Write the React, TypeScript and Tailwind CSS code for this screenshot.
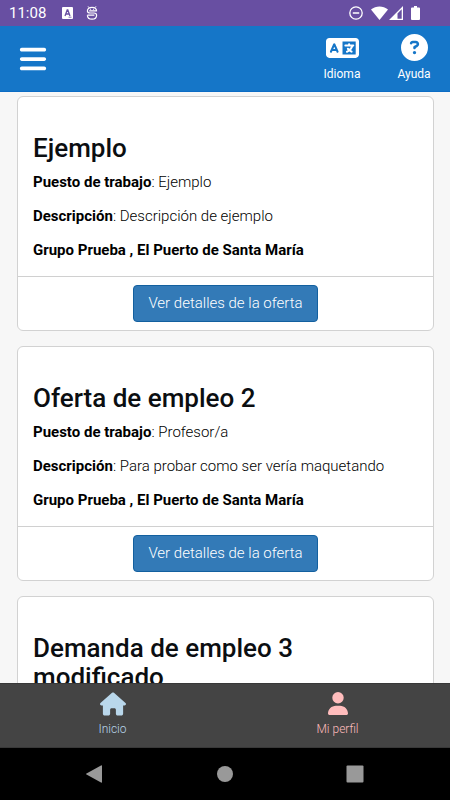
import React from "react";
import { FaBars, FaCircleQuestion, FaHouse, FaLanguage, FaUser } from "react-icons/fa6";

type Details = { job: string; description: string; place: string };
type Offer = { title: string; details?: Details };

const offers: Offer[] = [
  {
    title: "Ejemplo",
    details: {
      job: "Ejemplo",
      description: "Descripción de ejemplo",
      place: "Grupo Prueba , El Puerto de Santa María",
    },
  },
  {
    title: "Oferta de empleo 2",
    details: {
      job: "Profesor/a",
      description: "Para probar como ser vería maquetando",
      place: "Grupo Prueba , El Puerto de Santa María",
    },
  },
  { title: "Demanda de empleo 3 modificado" },
];

function StatusBar() {
  return (
    <div className="flex h-[26px] shrink-0 items-center bg-[#684fa2] pr-[30px] pl-[9px] text-white">
      <span className="w-[53px] text-[15px] leading-[26px]">11:08</span>
      <svg className="mr-[13px] h-3 w-[11px]" viewBox="0 0 11 12" aria-hidden="true">
        <rect width="11" height="12" rx="1" fill="#fff" />
        <path d="M3 9 5.2 3h.6L8 9M3.8 7h3.4" fill="none" stroke="#684fa2" strokeWidth="1.3" />
        <path d="M6.5 10.2h3" stroke="#684fa2" strokeWidth=".8" />
      </svg>
      <svg className="h-[14px] w-3" viewBox="0 0 12 14" fill="none" stroke="#fff" aria-hidden="true">
        <path
          d="M10.600 5.300C10.600 2.800 8.700 1.300 6 1.300S1.400 2.800 1.400 5c0 1.500 1 2 2.600 2h4c1.700 0 2.600.700 2.600 2.200 0 2.500-1.900 4-4.600 4s-4.600-1.500-4.600-4"
          strokeWidth="1.200"
        />
        <path d="M3.200 4.900h7.400M1.400 9.100h7" strokeWidth="1.100" />
        <path d="m2 .3 1.200 1.500M10 .3 8.800 1.800M4 3.300h1M7 3.300h1" strokeWidth=".9" />
      </svg>
      <div className="ml-auto flex items-center">
        <svg className="mr-2 h-3.5 w-3.5" viewBox="0 0 14 14" fill="none" stroke="#fff" aria-hidden="true">
          <circle cx="7" cy="7" r="6.2" strokeWidth="1.3" />
          <path d="M3.800 7h6.400" strokeWidth="1.5" />
        </svg>
        <svg className="mr-px h-[14px] w-[17px]" viewBox="0 0 17 14" aria-hidden="true">
          <path d="M0 3.500C5-.5 12-.5 17 3.500L8.500 14z" fill="#fff" />
        </svg>
        <svg className="mr-2 h-[14px] w-[14px]" viewBox="0 0 14 14" aria-hidden="true">
          <path
            fillRule="evenodd"
            d="M14 0v14H0zM12.700 3.200 8.500 7.400v5.300h4.200z"
            fill="#fff"
          />
        </svg>
        <svg className="h-[14px] w-[9px]" viewBox="0 0 9 14" aria-hidden="true">
          <path d="M3 0h3v1.500h2q1 0 1 1V13q0 1-1 1H1q-1 0-1-1V2.500q0-1 1-1h2z" fill="#fff" />
        </svg>
      </div>
    </div>
  );
}

function Header() {
  return (
    <header className="flex h-[66px] shrink-0 items-center border-b border-[#0c6cc4] bg-[#1576c8] pl-[18px] text-white">
      <button type="button" aria-label="Menú">
        <FaBars className="h-[30px] w-[30px]" />
      </button>
      <div className="ml-auto flex pb-[3px]">
        <button type="button" className="flex w-[72px] flex-col items-center">
          <FaLanguage className="h-[30px] w-[33px]" />
          <span className="mt-[3px] text-[12px] leading-4">Idioma</span>
        </button>
        <button type="button" className="flex w-[72px] flex-col items-center">
          <span className="flex h-[30px] items-center">
            <FaCircleQuestion className="h-[27px] w-[27px]" />
          </span>
          <span className="mt-[3px] text-[12px] leading-4">Ayuda</span>
        </button>
      </div>
    </header>
  );
}

function OfferCard({ title, details }: Offer) {
  return (
    <article className="shrink-0 rounded-md border border-[#d2d2d2] bg-white">
      <div className="px-[15px] pt-[37px] pb-3.5 text-[15px] leading-6 font-light text-black">
        <h2 className="mb-[7px] text-[26px] leading-[29px] font-medium text-[#0b0e11]">{title}</h2>
        {details && (
          <>
            <p className="mb-2.5">
              <strong className="font-bold">Puesto de trabajo</strong>: {details.job}
            </p>
            <p className="mb-2.5">
              <strong className="font-bold">Descripción</strong>: {details.description}
            </p>
            <p className="font-bold">{details.place}</p>
          </>
        )}
      </div>
      {details && (
        <div className="flex justify-center border-t border-[#d0d0d0] py-2">
          <button
            type="button"
            className="h-[37px] rounded border border-[#13609f] bg-[#337ab7] px-3.5 text-[15px] font-light text-white"
          >
            Ver detalles de la oferta
          </button>
        </div>
      )}
    </article>
  );
}

export default function App() {
  return (
    <div className="flex h-screen flex-col overflow-hidden bg-[#f7f7f7] font-['Roboto',sans-serif]">
      <StatusBar />
      <Header />
      <main className="flex min-h-0 flex-1 flex-col gap-[15px] overflow-y-auto px-4 pt-1 pl-[17px] [scrollbar-width:none]">
        {offers.map((offer) => (
          <OfferCard key={offer.title} {...offer} />
        ))}
      </main>
      <nav className="grid h-[65px] shrink-0 grid-cols-2 border-y border-[#383838] bg-[#444] text-[12px] leading-4">
        <a href="#inicio" className="flex flex-col items-center pt-2 text-[#b9d7eb]">
          <FaHouse className="h-6 w-[26px]" />
          <span className="mt-[5px] font-light">Inicio</span>
        </a>
        <a href="#perfil" className="flex flex-col items-center pt-2 text-[#ffbdbd]">
          <FaUser className="h-[23px] w-5" />
          <span className="mt-1.5 font-light">Mi perfil</span>
        </a>
      </nav>
      <div className="flex h-[52px] shrink-0 items-center justify-center gap-28 bg-black">
        <svg className="h-[18px] w-[18px]" viewBox="0 0 18 18" fill="#999" aria-hidden="true">
          <path d="M15 .5Q16 0 16 1v16q0 1-1 .5L.5 9.500q-1-.5 0-1z" />
        </svg>
        <svg className="h-[18px] w-[18px]" viewBox="0 0 18 18" fill="#999" aria-hidden="true">
          <circle cx="9" cy="9" r="8" />
        </svg>
        <svg className="h-[18px] w-[18px]" viewBox="0 0 18 18" fill="#999" aria-hidden="true">
          <rect x=".5" y=".5" width="17" height="17" rx="1" />
        </svg>
      </div>
    </div>
  );
}
